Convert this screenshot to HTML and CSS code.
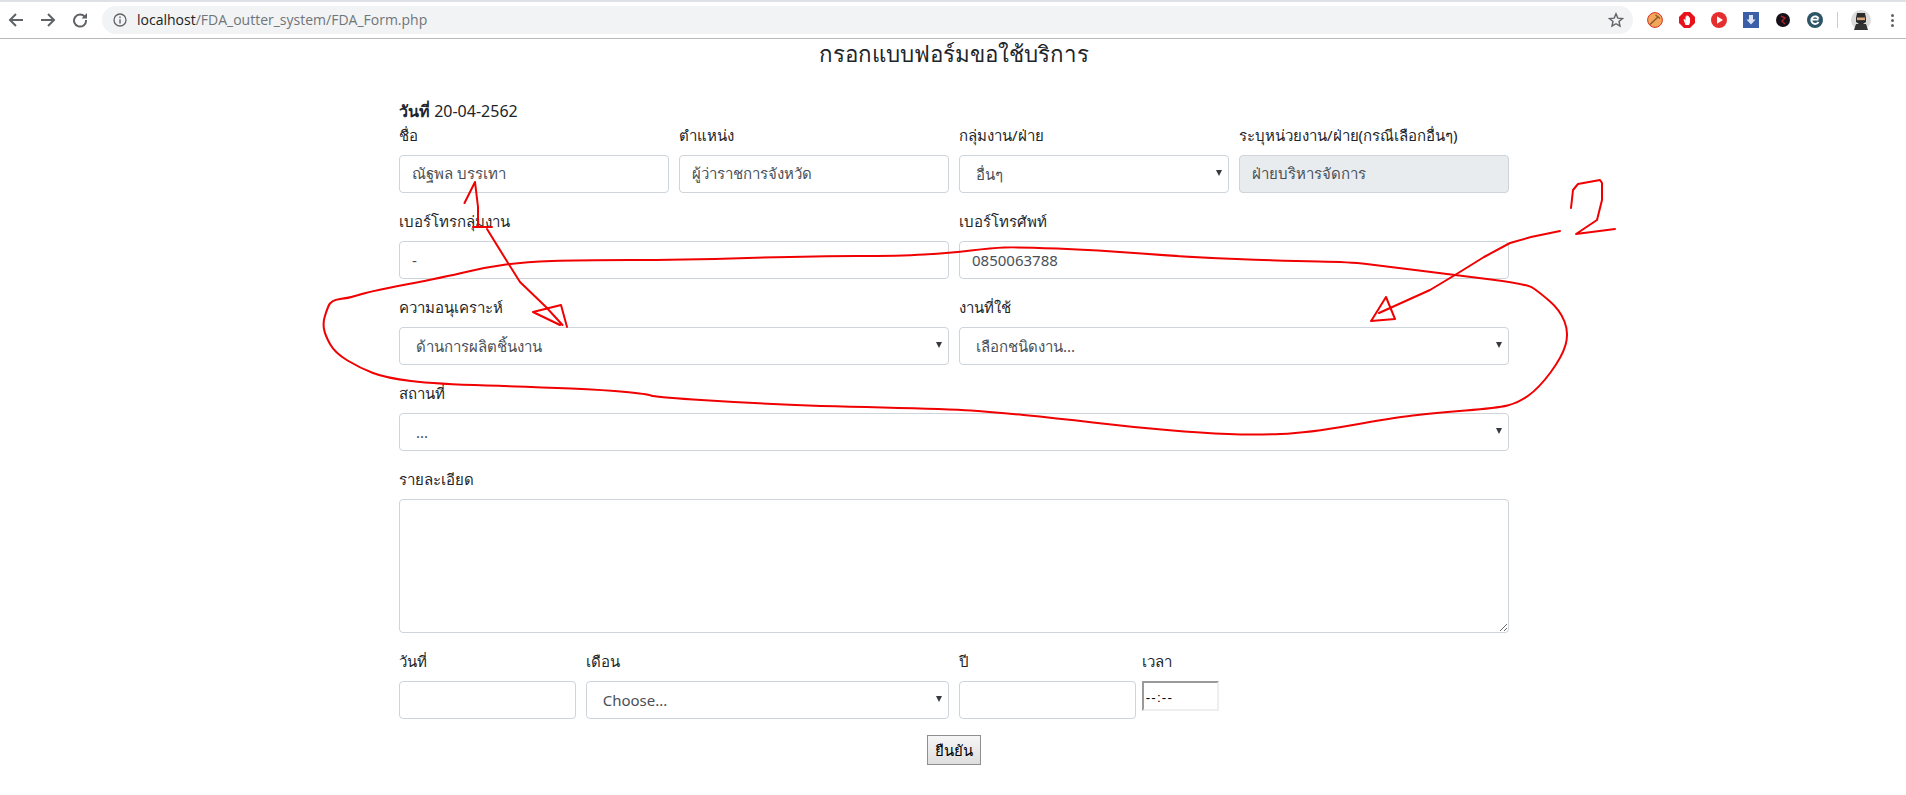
FILE: index.html
```html
<!DOCTYPE html>
<html>
<head>
<title>FDA Form</title>
<link rel="stylesheet" href="styles.css">
</head>
<body>

<div class="toolbar">
    <div class="navIcon">
        <svg width="16" height="16" viewBox="0 0 16 16"><path d="M15 8H2.5M8 2L2 8L8 14" fill="none" stroke="#5f6368" stroke-width="2"/></svg>
    </div>
    <div class="navIcon">
        <svg width="16" height="16" viewBox="0 0 16 16"><path d="M1 8H13.5M8 2L14 8L8 14" fill="none" stroke="#5f6368" stroke-width="2"/></svg>
    </div>
    <div class="navIcon">
        <svg width="16" height="16" viewBox="0 0 16 16"><path d="M13 5.2A6 6 0 1 0 14 8" fill="none" stroke="#5f6368" stroke-width="2"/><path d="M9.5 6.5H15V1z" fill="#5f6368"/></svg>
    </div>
    <div class="addressBar">
        <svg class="infoIcon" width="14" height="14" viewBox="0 0 14 14"><circle cx="7" cy="7" r="6" fill="none" stroke="#5f6368" stroke-width="1.3"/><path d="M7 6.2V10.4M7 3.6V5" stroke="#5f6368" stroke-width="1.4"/></svg>
        <div class="url"><span class="urlHost">localhost</span>/FDA_outter_system/FDA_Form.php</div>
        <svg class="starIcon" width="16" height="16" viewBox="0 0 16 16"><path d="M8 1.8L9.8 6.1L14.5 6.5L11 9.5L12 14.1L8 11.7L4 14.1L5 9.5L1.5 6.5L6.2 6.1z" fill="none" stroke="#5f6368" stroke-width="1.4"/></svg>
    </div>
    <div class="extensions">
        <svg width="16" height="16" viewBox="0 0 16 16"><circle cx="8" cy="8" r="7.4" fill="#f2a65a" stroke="#d93025"/><path d="M3 12.5L11.5 4.5M8.5 3L13 6.5" stroke="#8a5a2b" stroke-width="1.5"/></svg>
        <svg width="16" height="16" viewBox="0 0 16 16"><path d="M5 0H11L16 5V11L11 16H5L0 11V5z" fill="#e8121d"/><path d="M4.5 7.5L5.5 7L6.5 8.5V4.5H7.5V8V3.5H8.7V8V4H9.8V8.5V5.5H11V10.5L10 13H6.5z" fill="#fff"/></svg>
        <svg width="16" height="16" viewBox="0 0 16 16"><circle cx="8" cy="8" r="8" fill="#e62e2e"/><path d="M6 4.2L12 8L6 11.8z" fill="#fff"/></svg>
        <svg width="16" height="16" viewBox="0 0 16 16"><rect width="16" height="16" fill="#3a5fa8"/><path d="M6 3H10V7.5H12.5L8 12.5L3.5 7.5H6z" fill="#dce4f4"/></svg>
        <svg width="16" height="16" viewBox="0 0 16 16"><circle cx="8" cy="8" r="7" fill="#161018"/><path d="M6 4L10 6L7 9L10 12" fill="none" stroke="#b3202c" stroke-width="1.4"/></svg>
        <svg width="16" height="16" viewBox="0 0 16 16"><circle cx="8" cy="8" r="8" fill="#2d5568"/><path d="M4.5 7.6H11.5M11.5 10A3.8 3.8 0 1 1 11.6 6.6" fill="none" stroke="#fff" stroke-width="1.9"/></svg>
    </div>
    <div class="toolbarLine"></div>
    <svg class="avatar" width="20" height="20" viewBox="0 0 20 20"><circle cx="10" cy="10" r="10" fill="#dcdcdc"/><path d="M5 8L6 3H14L15 8V12L12 14H8L5 12z" fill="#2b2b2b"/><rect x="6" y="7.5" width="8" height="2.6" fill="#d9a679"/><path d="M3 20L5 14H15L17 20z" fill="#333"/></svg>
    <div class="menuDots"><span></span><span></span><span></span></div>
</div>

<div class="page">
    <svg class="scribble" width="1906" height="795" viewBox="0 0 1906 795">
        <path d="M340 299Q350 298 358.5 295Q367 292 406 284.5Q445 277 466 272Q487 267 506 264.5Q525 262 552 261Q579 260 629.5 260Q680 260 747.5 258Q815 256 857 256Q899 256 924.5 254.5Q950 253 971 250.5Q992 248 1004.5 247.5Q1017 247 1057 248.5Q1097 250 1141.5 253.5Q1186 257 1236.5 259Q1287 261 1318.5 261.5Q1350 262 1366.5 264Q1383 266 1419 270.5Q1455 275 1491 279.5Q1527 284 1533 288Q1539 292 1549.5 301Q1560 310 1564.5 321.5Q1569 333 1565.5 345Q1562 357 1550.5 372.5Q1539 388 1528.5 395.5Q1518 403 1507.5 405.5Q1497 408 1465.5 410.5Q1434 413 1413 415.5Q1392 418 1350 425.5Q1308 433 1280.5 434Q1253 435 1228 434Q1203 433 1167 430Q1131 427 1093 422.5Q1055 418 1023.5 415Q992 412 971 410.5Q950 409 882.5 407.5Q815 406 773 404Q731 402 693 399.5Q655 397 651 395.5Q647 394 626 392Q605 390 571 388.5Q537 387 486.5 385.5Q436 384 411 381Q386 378 373 373Q360 368 347.5 360.5Q335 353 330 344Q325 335 324 329Q323 323 324.5 317.5Q326 312 328.5 306Q331 300 340 299z"/>
        <path d="M464.5 203L470 192L475 182L478 207L478 227M473 227L492 227M487 229L508 263L520 282L546 307L562.5 325M560 325L533 312L561 305L567 327"/>
        <path d="M1560 231L1531 237L1510 243L1484 257L1455 275L1430 290L1379 313M1373 318L1371 321L1395 319L1386 297L1373 318"/>
        <path d="M1571 208L1573 190L1578 184L1600 180L1602 183L1602 200L1597 220L1576 234L1615 229"/>
    </svg>

    <div class="pageTitle">กรอกแบบฟอร์มขอใช้บริการ</div>

    <div class="container">
        <div class="dateLine"><b>วันที่</b> 20-04-2562</div>

        <div class="formRow fourCols">
            <div>
                <div class="label">ชื่อ</div>
                <input class="inputBox" value="ณัฐพล บรรเทา">
            </div>
            <div>
                <div class="label">ตำแหน่ง</div>
                <input class="inputBox" value="ผู้ว่าราชการจังหวัด">
            </div>
            <div>
                <div class="label">กลุ่มงาน/ฝ่าย</div>
                <div class="selectWrap"><select class="selectBox"><option>อื่นๆ</option></select></div>
            </div>
            <div>
                <div class="label">ระบุหน่วยงาน/ฝ่าย(กรณีเลือกอื่นๆ)</div>
                <input class="inputBox readOnlyBox" value="ฝ่ายบริหารจัดการ" readonly>
            </div>
        </div>

        <div class="formRow twoCols">
            <div>
                <div class="label">เบอร์โทรกลุ่มงาน</div>
                <input class="inputBox" value="-">
            </div>
            <div>
                <div class="label">เบอร์โทรศัพท์</div>
                <input class="inputBox" value="0850063788">
            </div>
        </div>

        <div class="formRow twoCols">
            <div>
                <div class="label">ความอนุเคราะห์</div>
                <div class="selectWrap"><select class="selectBox"><option>ด้านการผลิตชิ้นงาน</option></select></div>
            </div>
            <div>
                <div class="label">งานที่ใช้</div>
                <div class="selectWrap"><select class="selectBox"><option>เลือกชนิดงาน...</option></select></div>
            </div>
        </div>

        <div class="formRow">
            <div>
                <div class="label">สถานที่</div>
                <div class="selectWrap"><select class="selectBox"><option>...</option></select></div>
            </div>
        </div>

        <div class="formRow">
            <div>
                <div class="label">รายละเอียด</div>
                <textarea class="textbox"></textarea>
            </div>
        </div>

        <div class="formRow dateCols">
            <div>
                <div class="label">วันที่</div>
                <input class="inputBox">
            </div>
            <div>
                <div class="label">เดือน</div>
                <div class="selectWrap"><select class="selectBox"><option>Choose...</option></select></div>
            </div>
            <div>
                <div class="label">ปี</div>
                <input class="inputBox">
            </div>
            <div class="timeCol">
                <div class="label">เวลา</div>
                <div class="timeBox">--:--</div>
            </div>
        </div>

        <div class="buttonRow">
            <button class="saveBtn">ยืนยัน</button>
        </div>
    </div>
</div>

</body>
</html>
```

FILE: styles.css
```css
html, body{
    margin:0;
    height:795px;
    overflow:hidden;
}
body{
    font-family:"Noto Sans", "Liberation Sans", "DejaVu Sans", sans-serif;
    font-size:15px;
    line-height:24px;
    color:#212529;
    background:#fff;
}
.toolbar{
    height:36px;
    border-top:2px solid #dee1e6;
    border-bottom:1px solid #b8b8b8;
    display:flex;
    align-items:center;
    padding:0 0 0 8px;
    background:#fff;
}
.navIcon{
    width:32px;
    height:28px;
    display:flex;
    align-items:center;
}
.addressBar{
    margin-left:-2px;
    width:1531px;
    height:28px;
    border-radius:14px;
    background:#f1f3f4;
    display:flex;
    align-items:center;
    padding:0 9px 0 11px;
    box-sizing:border-box;
}
.url{
    flex:1;
    margin-left:10px;
    font-family:"Open Sans", "Liberation Sans", sans-serif;
    font-size:14px;
    line-height:16px;
    color:#70757a;
}
.urlHost{
    color:#202124;
}
.extensions{
    display:flex;
    gap:16px;
    margin-left:14px;
}
.toolbarLine{
    width:1px;
    height:16px;
    background:#ccc;
    margin-left:14px;
}
.avatar{
    margin-left:13px;
}
.menuDots{
    display:flex;
    flex-direction:column;
    gap:2px;
    margin-left:20px;
}
.menuDots span{
    width:3px;
    height:3px;
    border-radius:50%;
    background:#5f6368;
}
.page{
    position:relative;
    padding-left:2px;
}
.scribble{
    position:absolute;
    left:0;
    top:-39px;
    z-index:2;
    pointer-events:none;
}
.scribble path{
    fill:none;
    stroke:#f00000;
    stroke-width:2;
    stroke-linejoin:round;
    stroke-linecap:round;
}
.pageTitle{
    font-size:22.3px;
    line-height:29px;
    text-align:center;
    margin-bottom:31px;
}
.container{
    width:1110px;
    margin:0 auto;
}
.dateLine{
    font-size:16px;
    line-height:24px;
}
.formRow{
    display:grid;
    grid-template-columns:1fr;
    column-gap:10px;
    margin-bottom:16px;
}
.fourCols{
    grid-template-columns:repeat(4, 1fr);
}
.twoCols{
    grid-template-columns:repeat(2, 1fr);
}
.dateCols{
    grid-template-columns:176.67px 363.33px 176.67px 1fr;
}
.label{
    margin-bottom:8px;
    white-space:nowrap;
}
.inputBox, .selectBox{
    display:block;
    width:100%;
    height:38px;
    padding:6px 12px;
    border:1px solid #ced4da;
    border-radius:4px;
    box-sizing:border-box;
    background:#fff;
    color:#495057;
    font:inherit;
}
.selectBox{
    appearance:none;
    padding:6px 28px 6px 16px;
}
.selectWrap{
    position:relative;
}
.selectWrap::after{
    content:"";
    position:absolute;
    right:7px;
    top:15px;
    border-left:3px solid transparent;
    border-right:3px solid transparent;
    border-top:6px solid #343a40;
}
.readOnlyBox{
    background:#e9ecef;
}
.textbox{
    display:block;
    width:100%;
    height:134px;
    border:1px solid #ced4da;
    border-radius:4px;
    box-sizing:border-box;
    padding:6px 12px;
    background:#fff;
    font:inherit;
}
.timeCol{
    margin-left:-4px;
}
.timeBox{
    width:77px;
    height:30px;
    box-sizing:border-box;
    border:2px solid;
    border-color:#9a9a9a #eeeeee #eeeeee #9a9a9a;
    padding:0 2px;
    font-family:"Liberation Sans", sans-serif;
    font-size:13.3px;
    letter-spacing:1.2px;
    line-height:29px;
    color:#000;
}
.buttonRow{
    display:flex;
    justify-content:center;
}
.saveBtn{
    width:54px;
    height:30px;
    padding:0;
    border:1px solid #8f8f8f;
    background:linear-gradient(#f6f6f6, #dedede);
    font:inherit;
    line-height:26px;
    color:#000;
}
```
